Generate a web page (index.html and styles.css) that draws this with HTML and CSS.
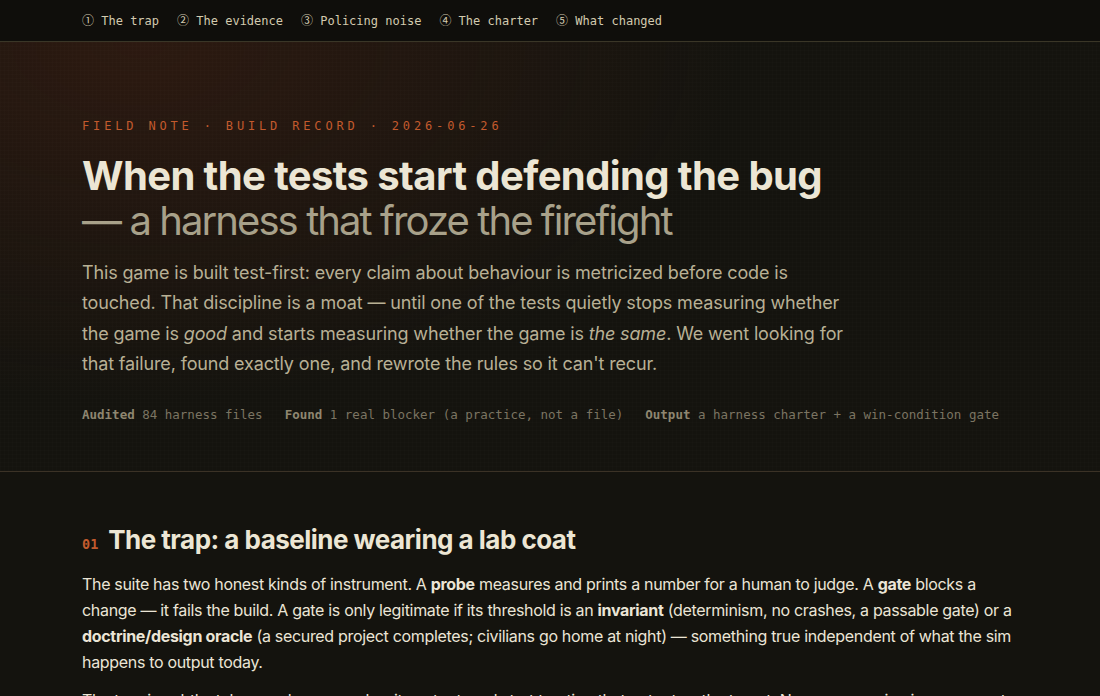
FILE: index.html
```html
<!DOCTYPE html>
<html lang="en">

<head>
    <meta charset="UTF-8">
    <meta name="viewport" content="width=device-width, initial-scale=1.0">
    <title>When the tests start defending the bug</title>
    <link rel="stylesheet" href="styles.css">
</head>

<body>
    <nav class="toc">
        <a href="#trap"><span class="n">①</span> The trap</a>
        <a href="#evidence"><span class="n">②</span> The evidence</a>
        <a href="#noise"><span class="n">③</span> Policing noise</a>
        <a href="#charter"><span class="n">④</span> The charter</a>
        <a href="#changed"><span class="n">⑤</span> What changed</a>
    </nav>

    <header class="hero">
        <div class="wrap">
            <p class="eyebrow">Field note · Build record · 2026-06-26</p>
            <h1>When the tests start defending the bug
                <span class="sub">— a harness that froze the firefight</span>
            </h1>
            <p class="lede">This game is built test-first: every claim about behaviour is metricized before code is
                touched. That discipline is a moat — until one of the tests quietly stops measuring whether the game is
                <em>good</em> and starts measuring whether the game is <em>the same</em>. We went looking for that
                failure, found exactly one, and rewrote the rules so it can't recur.</p>
            <ul class="meta">
                <li><b>Audited</b> 84 harness files</li>
                <li><b>Found</b> 1 real blocker (a practice, not a file)</li>
                <li><b>Output</b> a harness charter + a win-condition gate</li>
            </ul>
        </div>
    </header>

    <main class="wrap">
        <section id="trap">
            <h2><span class="num">01</span> The trap: a baseline wearing a lab coat</h2>
            <p>The suite has two honest kinds of instrument. A <b>probe</b> measures and prints a number for a human to
                judge. A <b>gate</b> blocks a change — it fails the build. A gate is only legitimate if its threshold is
                an <b>invariant</b> (determinism, no crashes, a passable gate) or a <b>doctrine/design oracle</b> (a
                secured project completes; civilians go home at night) — something true independent of what the sim
                happens to output today.</p>
            <p>The trap is subtle: take a probe, remember its output, and start treating that output as the target. Now
                any genuine improvement looks like a regression, and the suite defends the bug it was built to catch.</p>
        </section>
    </main>
</body>

</html>
```

FILE: styles.css
```css
* {
    box-sizing: border-box;
}

body {
    margin: 0;
    background-color: #14130e;
    color: #e9e3d3;
    font-family: Inter, "Noto Sans", sans-serif;
}

.wrap {
    padding: 0 82px;
}

/* Table of contents bar */
.toc {
    display: flex;
    gap: 18px;
    height: 42px;
    align-items: center;
    padding: 0 82px 2px;
    background: #0f0e0b;
    border-bottom: 1px solid #3a3627;
}

.toc a {
    color: #d3caaf;
    text-decoration: none;
    font-family: "DejaVu Sans Mono", monospace;
    font-size: 12px;
}

.toc .n {
    font-family: "Noto Sans CJK JP", sans-serif;
    font-size: 12px;
}

/* Hero header */
.hero {
    padding: 77px 0 49px;
    border-bottom: 1px solid #3b3226;
    background:
        linear-gradient(rgba(255, 255, 255, 0.006) 1px, transparent 1px) 0 0 / 4px 4px,
        linear-gradient(90deg, rgba(255, 255, 255, 0.006) 1px, transparent 1px) 0 0 / 4px 4px,
        radial-gradient(ellipse 600px 360px at 140px 0, rgba(100, 40, 22, 0.3), transparent 100%),
        #14130e;
}

.eyebrow {
    margin: 0 0 20px;
    color: #c25a2d;
    font-family: "DejaVu Sans Mono", monospace;
    font-size: 12px;
    letter-spacing: 0.32em;
    text-transform: uppercase;
}

h1 {
    margin: 0 0 15px;
    font-size: 40px;
    line-height: 45px;
    font-weight: 700;
    letter-spacing: -0.015em;
    color: #ece6d4;
}

h1 .sub {
    display: block;
    font-weight: 400;
    letter-spacing: -0.048em;
    color: #a8a18a;
}

.lede {
    max-width: 780px;
    margin: 0 0 28px;
    font-size: 18px;
    line-height: 30.3px;
    letter-spacing: -0.008em;
    color: #b8b095;
}

.meta {
    display: flex;
    gap: 22px;
    margin: 0;
    padding: 0;
    list-style: none;
    font-family: "DejaVu Sans Mono", monospace;
    font-size: 12.5px;
    color: #7b7462;
}

.meta b {
    color: #8e8670;
}

/* Article sections */
section {
    padding-top: 52px;
}

h2 {
    display: flex;
    align-items: baseline;
    gap: 10px;
    margin: 0 0 16px;
    font-size: 26px;
    font-weight: 700;
    letter-spacing: -0.02em;
    color: #ece6d4;
}

h2 .num {
    font-family: "DejaVu Sans Mono", monospace;
    font-size: 13.5px;
    font-weight: 700;
    color: #c25a2d;
    letter-spacing: 0;
}

section p {
    max-width: 940px;
    margin: 0 0 12px;
    font-size: 16px;
    line-height: 26px;
    letter-spacing: -0.02em;
    color: #ebe5d6;
}
```
